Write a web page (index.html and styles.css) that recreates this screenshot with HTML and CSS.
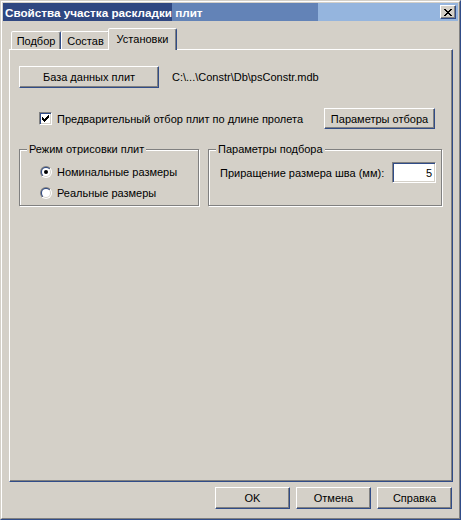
FILE: index.html
```html
<!DOCTYPE html>
<html lang="ru">
<head>
<meta charset="utf-8">
<title>Свойства участка раскладки плит</title>
<link rel="stylesheet" href="styles.css">
</head>
<body>
<div class="window">
  <div class="frame">
    <div class="titlebar">
      <span class="title">Свойства участка раскладки плит</span>
      <div class="close">
        <svg width="8" height="7" viewBox="0 0 8 7" shape-rendering="crispEdges"><path fill="#000" d="M0 0h2v1H0zM6 0h2v1H6zM1 1h2v1H1zM5 1h2v1H5zM2 2h4v1H2zM3 3h2v1H3zM2 4h4v1H2zM1 5h2v1H1zM5 5h2v1H5zM0 6h2v1H0zM6 6h2v1H6z"/></svg>
      </div>
    </div>
    <div class="client">
      <div class="tabs">
        <div class="tab t1">Подбор</div>
        <div class="tab t2">Состав</div>
        <div class="tab t3 active">Установки</div>
      </div>
      <div class="panel">
        <div class="db-row">
          <div class="btn db-btn">База данных плит</div>
          <span class="path">C:\...\Constr\Db\psConstr.mdb</span>
        </div>
        <div class="check-row">
          <span class="check">
            <svg width="7" height="7" viewBox="0 0 7 7" shape-rendering="crispEdges"><path fill="#000" d="M6 0h1v1H6zM5 1h2v1H5zM0 2h1v1H0zM4 2h3v1H4zM0 3h2v1H0zM3 3h3v1H3zM0 4h5v1H0zM1 5h3v1H1zM2 6h1v1H2z"/></svg>
          </span>
          <span class="check-label">Предварительный отбор плит по длине пролета</span>
          <div class="btn params-btn">Параметры отбора</div>
        </div>
        <div class="groups">
          <div class="group g1">
            <span class="group-title">Режим отрисовки плит</span>
            <div class="radio-row">
              <span class="radio">
                <svg width="12" height="12" viewBox="0 0 12 12">
                  <defs>
                    <linearGradient id="ro" x1="0" y1="0" x2="1" y2="1"><stop offset="0.5" stop-color="#808080"/><stop offset="0.5" stop-color="#ffffff"/></linearGradient>
                    <linearGradient id="ri" x1="0" y1="0" x2="1" y2="1"><stop offset="0.5" stop-color="#304c88"/><stop offset="0.5" stop-color="#d4d0c8"/></linearGradient>
                  </defs>
                  <circle cx="6" cy="6" r="6" fill="url(#ro)"/>
                  <circle cx="6" cy="6" r="5" fill="url(#ri)"/>
                  <circle cx="6" cy="6" r="4" fill="#fff"/>
                  <circle cx="6" cy="6" r="2" fill="#000"/>
                </svg>
              </span>
              <span>Номинальные размеры</span>
            </div>
            <div class="radio-row">
              <span class="radio">
                <svg width="12" height="12" viewBox="0 0 12 12">
                  <circle cx="6" cy="6" r="6" fill="url(#ro)"/>
                  <circle cx="6" cy="6" r="5" fill="url(#ri)"/>
                  <circle cx="6" cy="6" r="4" fill="#fff"/>
                </svg>
              </span>
              <span>Реальные размеры</span>
            </div>
          </div>
          <div class="group g2">
            <span class="group-title">Параметры подбора</span>
            <div class="field-row">
              <span>Приращение размера шва (мм):</span>
              <div class="input">5</div>
            </div>
          </div>
        </div>
      </div>
      <div class="buttons">
        <div class="btn dlg-btn">OK</div>
        <div class="btn dlg-btn">Отмена</div>
        <div class="btn dlg-btn">Справка</div>
      </div>
    </div>
  </div>
</div>
</body>
</html>
```

FILE: styles.css
```css
html, body {
  margin: 0;
  padding: 0;
  background: #d4d0c8;
}
body {
  font-family: "Liberation Sans", Arial, sans-serif;
  font-size: 11px;
  color: #000;
}
.window {
  width: 461px;
  height: 520px;
  box-sizing: border-box;
  border: 1px solid;
  border-color: #d4d0c8 #304c88 #304c88 #d4d0c8;
}
.frame {
  height: 100%;
  box-sizing: border-box;
  border: 1px solid;
  border-color: #ffffff #808080 #808080 #ffffff;
  padding: 1px;
  display: flex;
  flex-direction: column;
}
.titlebar {
  height: 18px;
  flex: none;
  display: flex;
  align-items: center;
  padding-left: 2px;
  padding-right: 2px;
  background: linear-gradient(to right, #2f4781 0, #2f4781 169px, #6383b7 169px, #6383b7 315px, #95b5de 315px, #95b5de 100%);
}
.title {
  flex: 1;
  color: #fff;
  font-weight: bold;
  font-size: 11.7px;
  white-space: nowrap;
}
.close {
  width: 16px;
  height: 14px;
  box-sizing: border-box;
  background: #d4d0c8;
  border: 1px solid;
  border-color: #ffffff #304c88 #304c88 #ffffff;
  box-shadow: inset -1px -1px 0 #808080;
  display: flex;
  align-items: center;
  justify-content: center;
  padding-right: 1px;
}
.close svg { display: block; }
.client {
  flex: 1;
  display: flex;
  flex-direction: column;
  padding: 7px 5px 8px 6px;
}
.tabs {
  height: 21px;
  flex: none;
  display: flex;
  align-items: flex-end;
  padding-left: 2px;
  position: relative;
  z-index: 1;
}
.tab {
  box-sizing: border-box;
  height: 18px;
  border: 1px solid;
  border-bottom: 0;
  border-color: #ffffff #304c88 transparent #ffffff;
  border-radius: 2px 2px 0 0;
  box-shadow: inset -1px 0 0 #808080;
  background: #d4d0c8;
  display: flex;
  align-items: center;
  justify-content: center;
  white-space: nowrap;
}
.t1 { width: 50px; }
.t2 { width: 49px; }
.t3 { width: 65px; }
.tab.active {
  width: 69px;
  height: 22px;
  margin: 0 -2px -1px -2px;
  padding-bottom: 2px;
  position: relative;
  z-index: 2;
}
.panel {
  height: 433px;
  flex: none;
  box-sizing: border-box;
  border: 1px solid;
  border-color: #ffffff #304c88 #304c88 #ffffff;
  box-shadow: inset -1px -1px 0 #808080;
  padding: 16px 10px 0 9px;
}
.btn {
  box-sizing: border-box;
  border: 1px solid;
  border-color: #ffffff #304c88 #304c88 #ffffff;
  box-shadow: inset -1px -1px 0 #808080;
  background: #d4d0c8;
  display: flex;
  align-items: center;
  justify-content: center;
  white-space: nowrap;
}
.db-row {
  display: flex;
  align-items: center;
  height: 22px;
}
.db-btn {
  width: 140px;
  height: 22px;
}
.path {
  margin-left: 13px;
}
.check-row {
  margin-top: 20px;
  height: 21px;
  display: flex;
  align-items: center;
  padding: 0 7px 0 20px;
}
.check {
  width: 13px;
  height: 13px;
  box-sizing: border-box;
  border: 1px solid;
  border-color: #808080 #ffffff #ffffff #808080;
  box-shadow: inset 1px 1px 0 #304c88, inset -1px -1px 0 #d4d0c8;
  background: #fff;
  display: flex;
  align-items: center;
  justify-content: center;
  margin-right: 5px;
}
.check svg { display: block; }
.params-btn {
  margin-left: auto;
  width: 111px;
  height: 21px;
}
.groups {
  margin-top: 20px;
  display: flex;
  gap: 9px;
}
.group {
  position: relative;
  box-sizing: border-box;
  height: 57px;
  border: 1px solid #808080;
  box-shadow: inset 1px 1px 0 #ffffff, 1px 1px 0 #ffffff;
}
.g1 {
  width: 180px;
  padding: 11px 0 0 20px;
}
.g2 {
  width: 234px;
  padding: 12px 5px 0 11px;
}
.group-title {
  position: absolute;
  top: -7px;
  left: 7px;
  padding: 0 2px 0 2px;
  line-height: 13px;
  background: #d4d0c8;
  white-space: nowrap;
}
.radio-row {
  height: 21px;
  display: flex;
  align-items: center;
}
.radio {
  width: 12px;
  height: 12px;
  margin-right: 5px;
}
.radio svg { display: block; }
.field-row {
  height: 21px;
  display: flex;
  align-items: center;
}
.input {
  margin-left: auto;
  width: 44px;
  height: 21px;
  box-sizing: border-box;
  border: 1px solid;
  border-color: #808080 #ffffff #ffffff #808080;
  box-shadow: inset 1px 1px 0 #304c88, inset -1px -1px 0 #d4d0c8;
  background: #fff;
  display: flex;
  align-items: center;
  justify-content: flex-end;
  padding-right: 3px;
}
.buttons {
  margin-top: 5px;
  display: flex;
  justify-content: flex-end;
  gap: 6px;
  padding-right: 1px;
}
.dlg-btn {
  width: 75px;
  height: 22px;
}
```
